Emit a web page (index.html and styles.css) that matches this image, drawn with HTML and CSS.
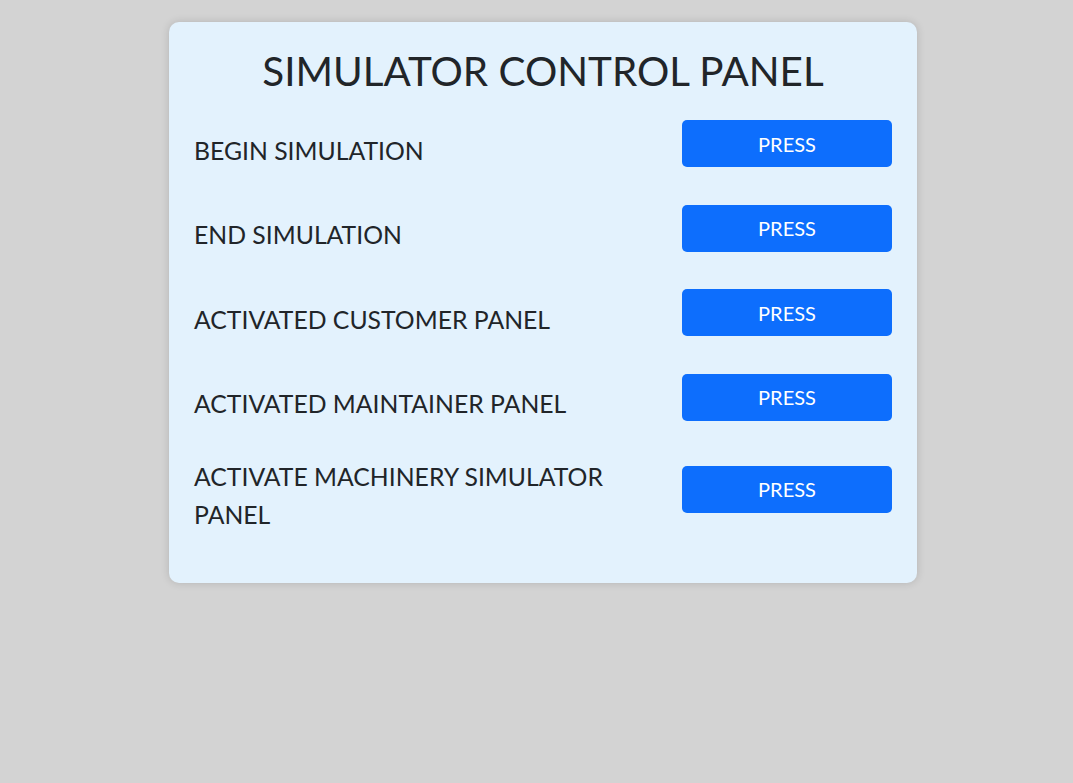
FILE: index.html
```html
<!DOCTYPE html>
<html lang="en">
<head>
<meta charset="utf-8">
<title>Simulator Control Panel</title>
<link rel="stylesheet" href="styles.css">
</head>
<body>
<div class="panel">
  <h1 class="title">SIMULATOR CONTROL PANEL</h1>
  <div class="row">
    <div class="label">BEGIN SIMULATION</div>
    <button class="btn">PRESS</button>
  </div>
  <div class="row">
    <div class="label">END SIMULATION</div>
    <button class="btn">PRESS</button>
  </div>
  <div class="row">
    <div class="label">ACTIVATED CUSTOMER PANEL</div>
    <button class="btn">PRESS</button>
  </div>
  <div class="row">
    <div class="label">ACTIVATED MAINTAINER PANEL</div>
    <button class="btn">PRESS</button>
  </div>
  <div class="row">
    <div class="label">ACTIVATE MACHINERY SIMULATOR PANEL</div>
    <button class="btn">PRESS</button>
  </div>
</div>
</body>
</html>
```

FILE: styles.css
```css
html, body {
  margin: 0;
  padding: 0;
}
body {
  background: #d3d3d3;
  font-family: Lato, "Liberation Sans", sans-serif;
  color: #212529;
  min-height: 783px;
}
.panel {
  box-sizing: border-box;
  width: 748px;
  margin: 22px 0 0 169px;
  padding: 16px 25px 49px 25px;
  background: #e3f2fd;
  border-radius: 10px;
  box-shadow: 0 0 8px rgba(0, 0, 0, 0.15);
}
.title {
  margin: 0 0 2px 0;
  font-size: 40.4px;
  font-weight: 400;
  line-height: 66px;
  text-align: center;
}
.row {
  display: flex;
  align-items: center;
  justify-content: space-between;
  min-height: 75px;
  margin-bottom: 9.5px;
}
.row:last-child {
  margin-bottom: 0;
}
.label {
  width: 440px;
  margin-top: 14px;
  font-size: 24.75px;
  line-height: 38px;
}
.btn {
  width: 210px;
  height: 47px;
  flex: none;
  border: none;
  border-radius: 5px;
  background: #0d6efd;
  color: #fff;
  font-family: inherit;
  font-size: 20px;
  padding: 0;
}
```
